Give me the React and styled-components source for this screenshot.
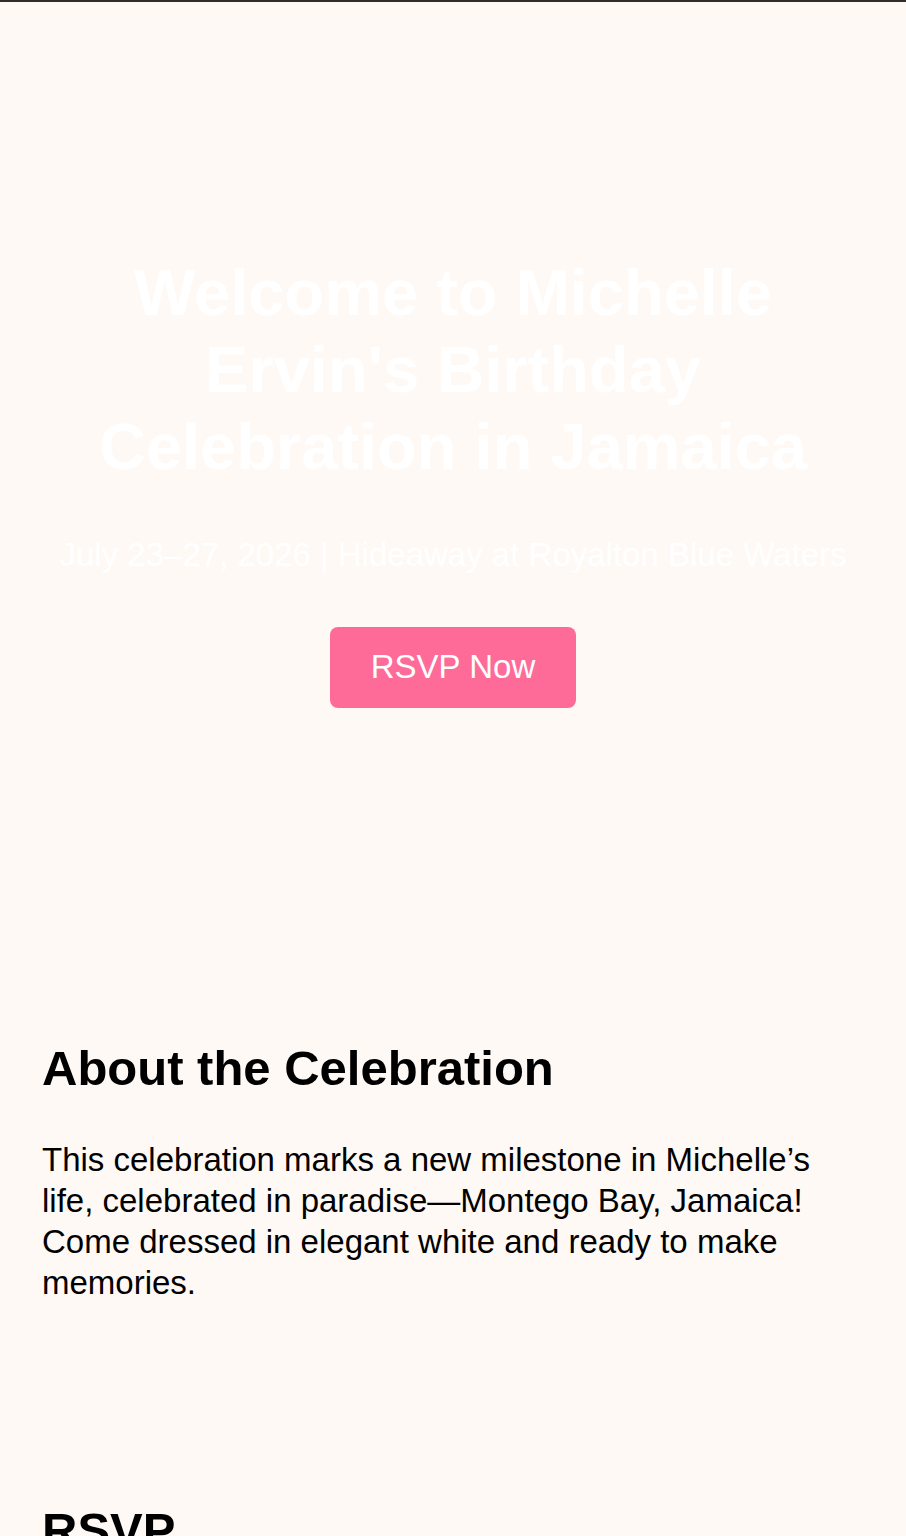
import React from 'react';
import styled, { createGlobalStyle } from 'styled-components';

const GlobalStyle = createGlobalStyle`
  body {
    margin: 0;
    background: #fff9f5;
    font-family: "Liberation Sans", Arial, Helvetica, sans-serif;
    color: #000;
  }
`;

const TopBar = styled.div`
  height: 2px;
  background: #2e2e2e;
`;

const Hero = styled.header`
  height: 958px;
  display: flex;
  flex-direction: column;
  align-items: center;
  justify-content: center;
  padding: 0 40px;
  text-align: center;
  color: #ffffff;
  box-sizing: border-box;
`;

const HeroTitle = styled.h1`
  margin: 0;
  max-width: 760px;
  font-size: 65px;
  line-height: 77px;
  font-weight: 700;
`;

const HeroSub = styled.p`
  margin: 51px 0 53px;
  font-size: 33px;
  line-height: 38px;
  white-space: nowrap;
`;

const RsvpButton = styled.a`
  display: inline-block;
  padding: 21px 41px 22px;
  background: #ff6b98;
  color: #ffffff;
  font-size: 33px;
  line-height: 38px;
  border-radius: 8px;
  text-decoration: none;
  cursor: pointer;
`;

const Section = styled.section`
  padding: ${(p) => p.$top}px 42px ${(p) => p.$bottom}px;
`;

const SectionTitle = styled.h2`
  margin: 0 0 43px;
  font-size: 49px;
  line-height: 56px;
  font-weight: 700;
`;

const Body = styled.p`
  margin: 0;
  font-size: 33px;
  line-height: 41px;
`;

export default function App() {
  return (
    <>
      <GlobalStyle />
      <TopBar />
      <Hero>
        <HeroTitle>Welcome to Michelle Ervin&apos;s Birthday Celebration in Jamaica</HeroTitle>
        <HeroSub>July 23–27, 2026 | Hideaway at Royalton Blue Waters</HeroSub>
        <RsvpButton href="#rsvp">RSVP Now</RsvpButton>
      </Hero>
      <Section $top={80} $bottom={119}>
        <SectionTitle>About the Celebration</SectionTitle>
        <Body>
          This celebration marks a new milestone in Michelle’s life, celebrated in paradise—Montego Bay,
          Jamaica! Come dressed in elegant white and ready to make memories.
        </Body>
      </Section>
      <Section id="rsvp" $top={80} $bottom={80}>
        <SectionTitle>RSVP</SectionTitle>
        <Body>Please let us know if you can join the celebration.</Body>
      </Section>
    </>
  );
}
